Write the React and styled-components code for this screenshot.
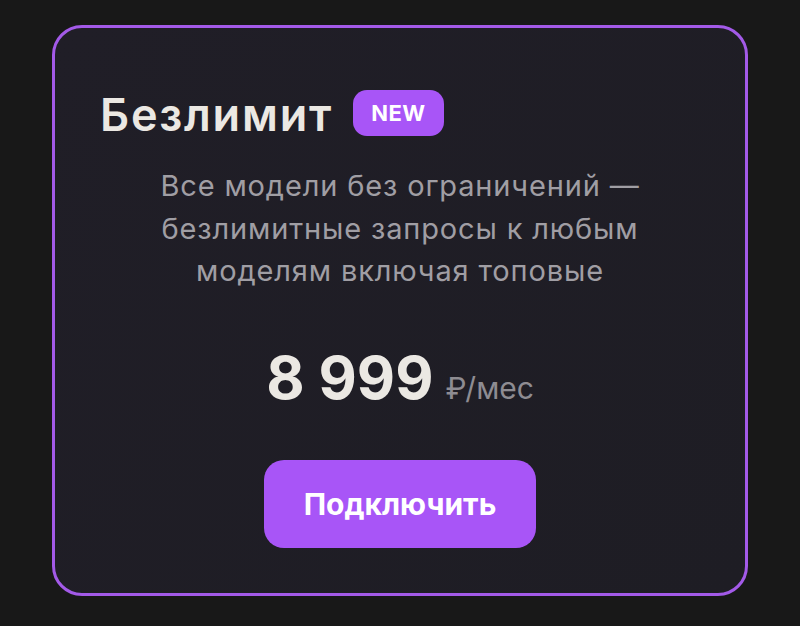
import React from "react";
import styled, { createGlobalStyle } from "styled-components";

const Global = createGlobalStyle`
  html, body {
    margin: 0;
    padding: 0;
    background: #181818;
    font-family: "Inter", "Noto Sans", sans-serif;
  }
`;

const Page = styled.div`
  width: 800px;
  height: 626px;
  padding: 25px 52px 30px;
  box-sizing: border-box;
`;

const Card = styled.div`
  height: 571px;
  box-sizing: border-box;
  border: 3px solid #a35ae8;
  border-radius: 30px;
  background: linear-gradient(135deg, #201e27 0%, #1e1d24 100%);
  padding: 62px 45px 0;
  display: flex;
  flex-direction: column;
  align-items: center;
`;

const Header = styled.div`
  align-self: stretch;
  display: flex;
  align-items: center;
  gap: 20px;
`;

const Title = styled.h2`
  margin: 0;
  font-size: 45px;
  font-weight: 600;
  color: #ebe8e3;
  letter-spacing: 1.8px;
  line-height: 46px;
  padding-top: 2px;
`;

const Badge = styled.span`
  background: #a855f7;
  color: #fff;
  font-size: 22px;
  font-weight: 700;
  letter-spacing: 0.5px;
  padding: 0 18px;
  height: 46px;
  line-height: 46px;
  border-radius: 14px;
  margin-top: -3px;
`;

const Description = styled.p`
  margin: 27px 0 0;
  font-size: 29px;
  line-height: 42.5px;
  letter-spacing: 0.85px;
  color: #a09ea4;
  text-align: center;
  max-width: 540px;
`;

const Price = styled.div`
  margin-top: 49px;
  display: flex;
  align-items: baseline;
  gap: 12px;
`;

const Amount = styled.span`
  font-size: 59px;
  font-weight: 700;
  color: #ebe8e3;
`;

const Unit = styled.span`
  font-size: 30px;
  color: #8e8c92;
`;

const Button = styled.button`
  margin-top: 47px;
  width: 272px;
  height: 88px;
  border: none;
  border-radius: 20px;
  background: #a855f7;
  color: #fff;
  font-family: inherit;
  font-size: 30px;
  font-weight: 700;
  cursor: pointer;
`;

export default function App() {
  return (
    <Page>
      <Global />
      <Card>
        <Header>
          <Title>Безлимит</Title>
          <Badge>NEW</Badge>
        </Header>
        <Description>
          Все модели без ограничений — безлимитные запросы к любым моделям включая топовые
        </Description>
        <Price>
          <Amount>8 999</Amount>
          <Unit>₽/мес</Unit>
        </Price>
        <Button>Подключить</Button>
      </Card>
    </Page>
  );
}
